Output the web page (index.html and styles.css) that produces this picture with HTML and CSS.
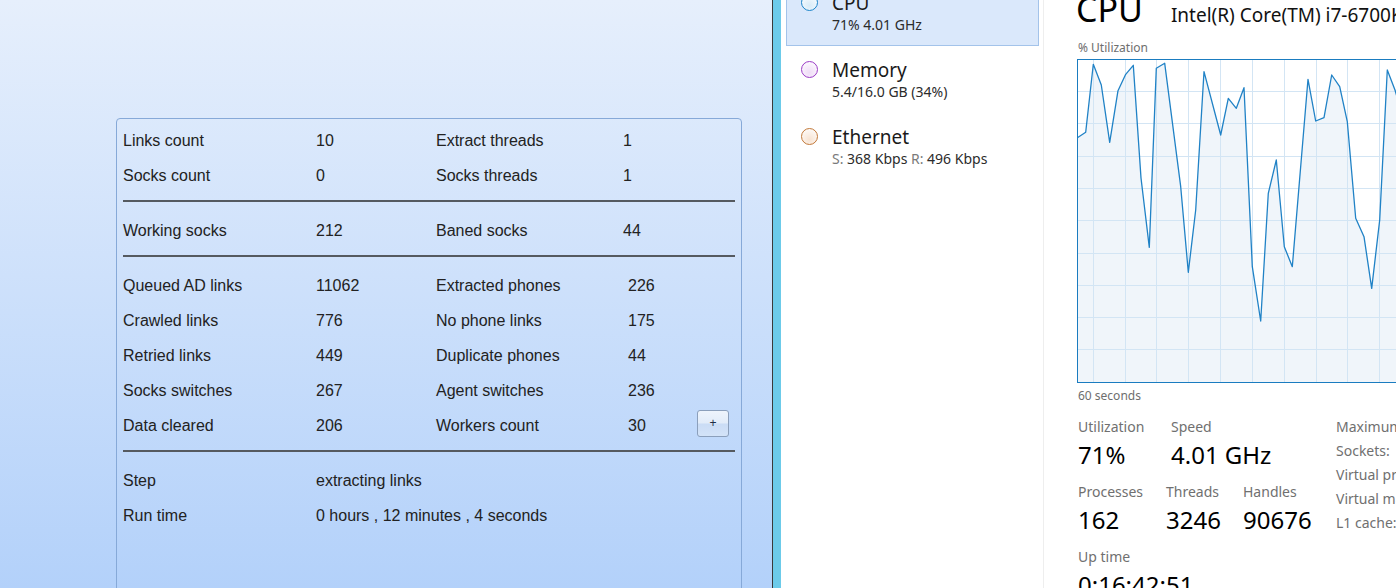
FILE: index.html
```html
<!DOCTYPE html>
<html lang="en">
<head>
    <meta charset="UTF-8">
    <title>Scraper status</title>
    <link rel="stylesheet" href="styles.css">
</head>
<body>
<div class="app">
    <section class="scraper">
        <div class="stats-box">
            <div class="stats-grid">
                <span>Links count</span><span>10</span><span>Extract threads</span><span>1</span>
                <span>Socks count</span><span>0</span><span>Socks threads</span><span>1</span>
            </div>
            <div class="sep"></div>
            <div class="stats-grid">
                <span>Working socks</span><span>212</span><span>Baned socks</span><span>44</span>
            </div>
            <div class="sep"></div>
            <div class="stats-grid wide">
                <span>Queued AD links</span><span>11062</span><span>Extracted phones</span><span>226</span>
                <span>Crawled links</span><span>776</span><span>No phone links</span><span>175</span>
                <span>Retried links</span><span>449</span><span>Duplicate phones</span><span>44</span>
                <span>Socks switches</span><span>267</span><span>Agent switches</span><span>236</span>
                <span>Data cleared</span><span>206</span><span>Workers count</span>
                <span class="with-btn">30<button class="plus" type="button">+</button></span>
            </div>
            <div class="sep"></div>
            <div class="stats-grid two">
                <span>Step</span><span>extracting links</span>
                <span>Run time</span><span>0 hours , 12 minutes , 4 seconds</span>
            </div>
        </div>
    </section>

    <div class="edge"></div>

    <section class="taskmgr">
        <nav class="perf-list">
            <div class="perf-item selected">
                <span class="dot cpu"></span>
                <div class="perf-text">
                    <div class="perf-name">CPU</div>
                    <div class="perf-sub">71% 4.01 GHz</div>
                </div>
            </div>
            <div class="perf-item">
                <span class="dot mem"></span>
                <div class="perf-text">
                    <div class="perf-name">Memory</div>
                    <div class="perf-sub">5.4/16.0 GB (34%)</div>
                </div>
            </div>
            <div class="perf-item">
                <span class="dot net"></span>
                <div class="perf-text">
                    <div class="perf-name">Ethernet</div>
                    <div class="perf-sub"><span class="dim">S:</span> 368 Kbps <span class="dim">R:</span> 496 Kbps</div>
                </div>
            </div>
        </nav>

        <main class="perf-detail">
            <div class="detail-head">
                <span class="detail-title">CPU</span>
                <span class="detail-model">Intel(R) Core(TM) i7-6700K CPU @ 4.00GHz</span>
            </div>
            <div class="caption">% Utilization</div>
            <svg class="graph" width="340" height="324" viewBox="0 0 340 324">
                <polygon fill="#f0f5fa" points="0,324 0,79 8.7,73.3 16.3,5.3 24.3,26 32.7,83.3 41,31.7 48.7,15.3 56.3,6.3 64,119 72.3,188.3 79.3,9.3 87.7,4.3 103.7,127.7 111.3,213.3 118.7,151 127,12.7 143.7,76 151.3,39.3 159.3,49.3 167,28.7 175.3,207.7 183.7,262 191.3,134.3 199.3,101 207.3,187.7 215.3,207.7 231,20.3 238.7,62 247,58.7 254.7,16 262.7,27.7 270.3,62.7 278.7,159.3 287,177.7 294.7,229.3 302.7,161 310.3,11 318,31 326,58 334,40 340,52 340,324"/>
                <g stroke="#d3e5f4" stroke-width="1">
                    <line x1="16.5" y1="0" x2="16.5" y2="324"/>
                    <line x1="48.5" y1="0" x2="48.5" y2="324"/>
                    <line x1="79.5" y1="0" x2="79.5" y2="324"/>
                    <line x1="111.5" y1="0" x2="111.5" y2="324"/>
                    <line x1="143.5" y1="0" x2="143.5" y2="324"/>
                    <line x1="175.5" y1="0" x2="175.5" y2="324"/>
                    <line x1="207.5" y1="0" x2="207.5" y2="324"/>
                    <line x1="239.5" y1="0" x2="239.5" y2="324"/>
                    <line x1="270.5" y1="0" x2="270.5" y2="324"/>
                    <line x1="302.5" y1="0" x2="302.5" y2="324"/>
                    <line x1="334.5" y1="0" x2="334.5" y2="324"/>
                    <line x1="0" y1="32.5" x2="340" y2="32.5"/>
                    <line x1="0" y1="64.5" x2="340" y2="64.5"/>
                    <line x1="0" y1="97.5" x2="340" y2="97.5"/>
                    <line x1="0" y1="129.5" x2="340" y2="129.5"/>
                    <line x1="0" y1="161.5" x2="340" y2="161.5"/>
                    <line x1="0" y1="194.5" x2="340" y2="194.5"/>
                    <line x1="0" y1="226.5" x2="340" y2="226.5"/>
                    <line x1="0" y1="258.5" x2="340" y2="258.5"/>
                    <line x1="0" y1="290.5" x2="340" y2="290.5"/>
                </g>
                <polyline fill="none" stroke="#2082c6" stroke-width="1.3" stroke-linejoin="round" points="0,79 8.7,73.3 16.3,5.3 24.3,26 32.7,83.3 41,31.7 48.7,15.3 56.3,6.3 64,119 72.3,188.3 79.3,9.3 87.7,4.3 103.7,127.7 111.3,213.3 118.7,151 127,12.7 143.7,76 151.3,39.3 159.3,49.3 167,28.7 175.3,207.7 183.7,262 191.3,134.3 199.3,101 207.3,187.7 215.3,207.7 231,20.3 238.7,62 247,58.7 254.7,16 262.7,27.7 270.3,62.7 278.7,159.3 287,177.7 294.7,229.3 302.7,161 310.3,11 318,31 326,58 334,40 340,52"/>
                <rect x="0.5" y="0.5" width="345" height="323" fill="none" stroke="#1a7cc0" stroke-width="1"/>
            </svg>
            <div class="caption after">60 seconds</div>

            <div class="summary">
                <div class="summary-main">
                    <div class="stat-row">
                        <div class="stat w93"><div class="stat-label">Utilization</div><div class="stat-value">71%</div></div>
                        <div class="stat"><div class="stat-label">Speed</div><div class="stat-value">4.01 GHz</div></div>
                    </div>
                    <div class="stat-row">
                        <div class="stat w88"><div class="stat-label">Processes</div><div class="stat-value">162</div></div>
                        <div class="stat w77"><div class="stat-label">Threads</div><div class="stat-value">3246</div></div>
                        <div class="stat"><div class="stat-label">Handles</div><div class="stat-value">90676</div></div>
                    </div>
                    <div class="stat-row">
                        <div class="stat"><div class="stat-label">Up time</div><div class="stat-value">0:16:42:51</div></div>
                    </div>
                </div>
                <div class="specs">
                    <div>Maximum speed:</div>
                    <div>Sockets:</div>
                    <div>Virtual processors:</div>
                    <div>Virtual machine:</div>
                    <div>L1 cache:</div>
                </div>
            </div>
        </main>
    </section>
</div>
</body>
</html>
```

FILE: styles.css
```css
* {
    box-sizing: border-box;
}

body {
    margin: 0;
    height: 588px;
    overflow: hidden;
    background: #fff;
}

.app {
    display: flex;
    height: 588px;
}

/* left: scraper window */
.scraper {
    width: 772px;
    flex: none;
    padding: 118px 0 0 116px;
    overflow: hidden;
    background: linear-gradient(to bottom, #e6effc, #b3d1fa);
    font-family: "Liberation Sans", Arial, sans-serif;
    font-size: 16px;
    color: #222;
}

.stats-box {
    width: 626px;
    height: 500px;
    border: 1px solid #86a9d8;
    border-radius: 4px;
    padding: 4px 6px 0;
}

.stats-grid {
    display: grid;
    grid-template-columns: 193px 120px 187px 1fr;
    grid-auto-rows: 35px;
    line-height: 35px;
    white-space: nowrap;
}

.stats-grid.wide {
    grid-template-columns: 193px 120px 192px 1fr;
}

.stats-grid.two {
    grid-template-columns: 193px 1fr;
}

.sep {
    height: 2px;
    margin: 7px 0 11px;
    background: #555a60;
}

.with-btn {
    display: flex;
    align-items: center;
    justify-content: space-between;
}

.plus {
    width: 32px;
    height: 27px;
    margin: -5px 6px 0 0;
    padding: 0;
    border: 1px solid #8b9fbb;
    border-radius: 3px;
    background: linear-gradient(to bottom, #eef4fc 0%, #e2ecf9 48%, #cadcf5 52%, #d3e3f8 100%);
    font-family: "Liberation Sans", Arial, sans-serif;
    font-size: 12px;
    line-height: 25px;
    color: #1d2c46;
}

.edge {
    width: 9px;
    flex: none;
    border-left: 1px solid #3a3a3a;
    background: #6ccbea;
}

/* right: performance view */
.taskmgr {
    flex: 1;
    min-width: 0;
    display: flex;
    overflow: hidden;
    font-family: "Noto Sans", sans-serif;
    color: #1a1a1a;
}

.perf-list {
    width: 263px;
    flex: none;
    margin-top: -21px;
    padding: 0 4px 0 5px;
    border-right: 1px solid #eeeeee;
}

.perf-item {
    display: flex;
    height: 67px;
    padding-left: 14px;
    border: 1px solid transparent;
}

.perf-item.selected {
    background: #dae8fb;
    border-color: #a3c3ea;
}

.dot {
    width: 17px;
    height: 17px;
    margin-top: 14px;
    flex: none;
    border-radius: 50%;
    border: 1.7px solid;
}

.dot.cpu {
    border-color: #1b84c9;
    background: radial-gradient(circle at 50% 70%, #d8ebf8, #ffffff);
}

.dot.mem {
    border-color: #9b3cc6;
    background: radial-gradient(circle at 50% 70%, #efdcf7, #ffffff);
}

.dot.net {
    border-color: #c27838;
    background: radial-gradient(circle at 50% 70%, #f7e3d2, #ffffff);
}

.perf-text {
    margin-left: 14px;
    padding-top: 11px;
}

.perf-name {
    font-size: 19px;
    line-height: 24px;
}

.perf-sub {
    font-size: 14px;
    line-height: 20px;
    color: #2b2b2b;
}

.perf-sub .dim {
    color: #7a7a7a;
}

.perf-detail {
    flex: 1;
    min-width: 0;
    padding-left: 34px;
    overflow: hidden;
}

.detail-head {
    display: flex;
    align-items: baseline;
    height: 40px;
    margin-top: -11px;
    white-space: nowrap;
}

.detail-title {
    margin-left: -2px;
    font-size: 34px;
    line-height: 40px;
    color: #000;
}

.detail-model {
    margin-left: 28px;
    font-size: 19px;
    color: #111;
}

.caption {
    margin-top: 11px;
    font-size: 12px;
    line-height: 16px;
    color: #6e6e6e;
}

.caption.after {
    margin-top: 5px;
}

.graph {
    display: block;
    margin-top: 3px;
    margin-left: -1px;
}

.summary {
    display: flex;
    margin-top: 12px;
    white-space: nowrap;
}

.summary-main {
    width: 258px;
    flex: none;
}

.stat-row {
    display: flex;
    margin-bottom: 9px;
}

.stat.w93 {
    width: 93px;
}

.stat.w88 {
    width: 88px;
}

.stat.w77 {
    width: 77px;
}

.stat-label {
    font-size: 14px;
    line-height: 22px;
    color: #707070;
}

.stat-value {
    font-size: 24px;
    line-height: 34px;
    color: #000;
}

.specs {
    margin-top: -1px;
    font-size: 14px;
    line-height: 24px;
    color: #707070;
}
```
